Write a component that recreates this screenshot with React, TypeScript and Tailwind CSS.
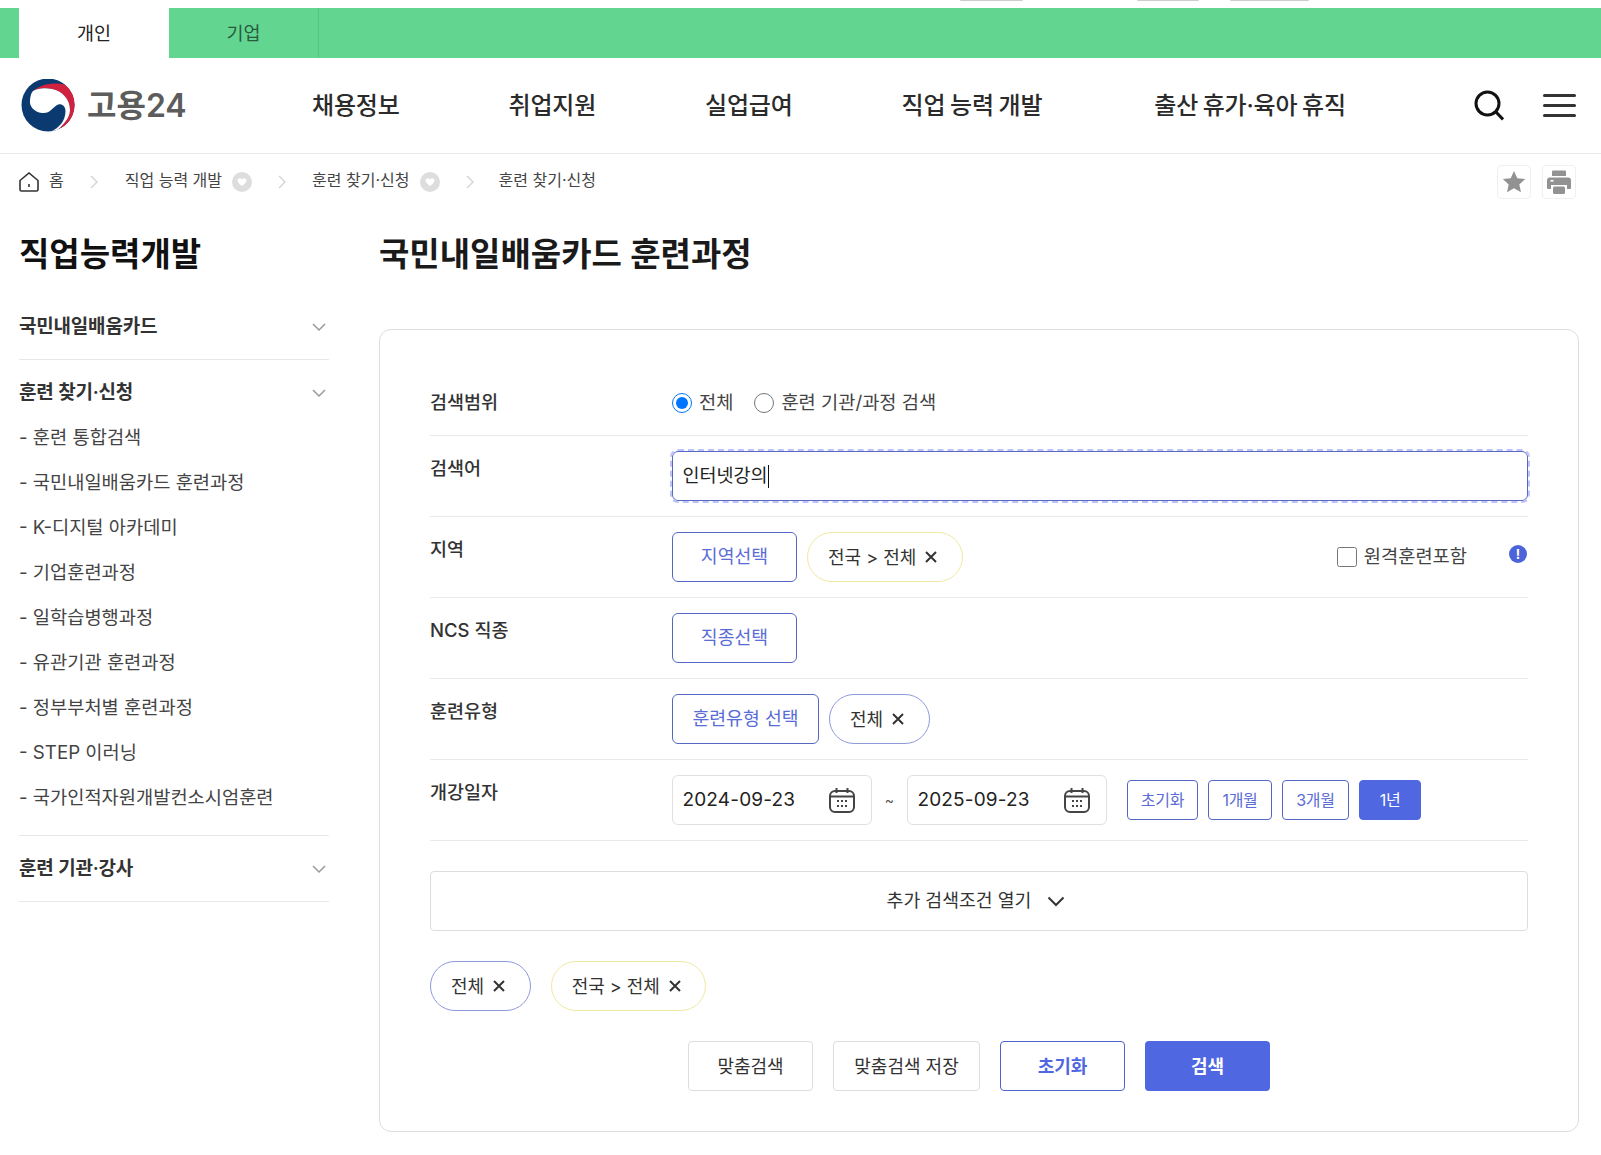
const font = "font-['Inter','Noto_Sans_CJK_KR',sans-serif]";

function Logo() {
  return (
    <svg width="54" height="53" viewBox="0 0 54 53" className="shrink-0">
      <circle cx="27" cy="26" r="26.5" fill="#0b3a70" />
      <path d="M12 12C20 5 33 3 44 5.6A26.5 26.5 0 0 1 37 50.6C44 44 49 38 49 31C49 20 41 12 31 10C24 8.5 17 9 12 12Z" fill="#d2203f" />
      <path d="M44 5.6A26.5 26.5 0 0 1 54 26V0H44Z" fill="#fff" />
      <path d="M54 26A26.5 26.5 0 0 1 37 50.6V53H54Z" fill="#fff" />
      <path d="M12 12C17 9 24 8.5 31 10C41 12 49 20 49 31C49 38 44 44 37 50.6L30 52.5C38 49 44.5 42 44.5 32C44.5 27 40 24 36 26C31 29 29 35 21 34C13 33 8 27 9 21C9.5 17 10 14 12 12Z" fill="#fff" />
    </svg>
  );
}

function Chevron({ className }: { className: string }) {
  return (
    <svg width="8" height="14" viewBox="0 0 8 14" fill="none" stroke="#d4d4d4" strokeWidth="1.4" className={className}>
      <path d="M1 1l6 6-6 6" />
    </svg>
  );
}

function DownDot() {
  return (
    <span className="ml-[10px] flex h-5 w-5 shrink-0 items-center justify-center rounded-full bg-[#dddddd]">
      <svg width="10" height="8" viewBox="0 0 10 8" fill="#fff">
        <path d="M0.5 2.5C0.5 0.5 3.5 -0.5 5 1.3C6.5 -0.5 9.5 0.5 9.5 2.5C9.5 4.5 6.5 7 5 8C3.5 7 0.5 4.5 0.5 2.5Z" />
      </svg>
    </span>
  );
}

function SideToggle({ label }: { label: string }) {
  return (
    <div className="flex h-[26px] items-center justify-between">
      <span className="text-[19px] font-semibold tracking-[-0.2px] text-[#333]">{label}</span>
      <svg width="14" height="9" viewBox="0 0 14 9" fill="none" stroke="#999" strokeWidth="1.5" className="mr-[3px]">
        <path d="M1 1l6 6 6-6" />
      </svg>
    </div>
  );
}

function CloseX() {
  return (
    <svg width="12" height="12" viewBox="0 0 12 12" fill="none" stroke="#333" strokeWidth="2" className="shrink-0">
      <path d="M1 1l10 10M11 1L1 11" />
    </svg>
  );
}

function Chip({ label, tone }: { label: string; tone: "blue" | "yellow" }) {
  return (
    <span
      className={
        "flex h-[50px] items-center gap-[9px] rounded-full border bg-white pl-[20px] pr-[24.5px] text-[18px] text-[#333] " +
        (tone === "blue" ? "border-[#8f99de]" : "border-[#f0e9a0]")
      }
    >
      {label}
      <CloseX />
    </span>
  );
}

function PickButton({ label, width }: { label: string; width: string }) {
  return (
    <button className={"h-[50px] rounded-md border border-[#5568c4] bg-white text-[18.3px] text-[#5a6cd6] " + width}>
      {label}
    </button>
  );
}

function Row({ label, children }: { label: string; children: React.ReactNode }) {
  return (
    <div className="flex h-[81px] border-b border-[#eaeaea] pt-[15px]">
      <div className="w-[242px] shrink-0 pt-[2px] text-[18.5px] font-medium leading-[30px] text-[#333]">{label}</div>
      <div className="flex flex-1 items-start">{children}</div>
    </div>
  );
}

function Calendar() {
  return (
    <svg width="28" height="26" viewBox="0 0 28 26" fill="none" stroke="#444" strokeWidth="2" className="shrink-0">
      <rect x="2" y="4" width="24" height="21" rx="5" />
      <path d="M2 9.5h24M8.5 1v5M19.5 1v5" />
      <g fill="#444" stroke="none">
        <rect x="9" y="13" width="2" height="2" />
        <rect x="13" y="13" width="2" height="2" />
        <rect x="17" y="13" width="2" height="2" />
        <rect x="9" y="18" width="2" height="2" />
        <rect x="13" y="18" width="2" height="2" />
        <rect x="17" y="18" width="2" height="2" />
      </g>
    </svg>
  );
}

function DateBox({ value }: { value: string }) {
  return (
    <div className="flex h-[50px] w-[200px] items-center justify-between rounded-md border border-[#e0e0e0] pl-[9.5px] pr-[15px] text-[19px] tracking-[0.15px] text-[#222]">
      <span className="pt-px">{value}</span>
      <Calendar />
    </div>
  );
}

function RangeButton({ label, width, active }: { label: string; width: string; active?: boolean }) {
  return (
    <button
      className={
        "h-[40px] rounded-[4px] border text-[16px] tracking-[-0.3px] " +
        width +
        (active ? " border-[#4f67e0] bg-[#4f67e0] text-white" : " border-[#5568c4] bg-white text-[#5a6cd6]")
      }
    >
      {label}
    </button>
  );
}

const subLinks = [
  "- 훈련 통합검색",
  "- 국민내일배움카드 훈련과정",
  "- K-디지털 아카데미",
  "- 기업훈련과정",
  "- 일학습병행과정",
  "- 유관기관 훈련과정",
  "- 정부부처별 훈련과정",
  "- STEP 이러닝",
  "- 국가인적자원개발컨소시엄훈련",
];

export default function App() {
  return (
    <div className={"h-[1155px] overflow-hidden bg-white " + font}>
      <div className="flex h-2 items-start">
        <span className="ml-[960px] h-px w-[63px] rounded-b bg-[#cccccc]" />
        <span className="ml-[114px] h-px w-[62px] rounded-b bg-[#cccccc]" />
        <span className="ml-[31px] h-px w-[79px] rounded-b bg-[#cccccc]" />
      </div>

      <div className="flex h-[50px] bg-[#62d591] pl-[19px]">
        <div className="flex w-[150px] items-center justify-center bg-white pt-px text-[18.5px] text-[#222]">개인</div>
        <div className="flex w-[150px] items-center justify-center border-r border-[#56c283] pt-px text-[18.5px] text-[#2a5a3e]">기업</div>
      </div>

      <header className="flex h-[96px] items-center border-b border-[#e8e8e8] pl-[21px] pr-[25px]">
        <div className="flex w-[291px] items-center gap-[12px]">
          <Logo />
          <span className="text-[32px] font-semibold text-[#5c5c5c]">고용24</span>
        </div>
        <nav className="flex gap-[109px] text-[24px] font-medium tracking-[-0.2px] text-[#2b2b2b] [word-spacing:-1.5px]">
          <span>채용정보</span>
          <span>취업지원</span>
          <span>실업급여</span>
          <span>직업 능력 개발</span>
          <span className="ml-[3px]">출산 휴가·육아 휴직</span>
        </nav>
        <div className="ml-auto flex items-center gap-[39px]">
          <svg width="30" height="31" viewBox="0 0 30 31" fill="none" stroke="#111" strokeWidth="3">
            <circle cx="13.5" cy="13.5" r="11.5" />
            <path d="M22 22l7 7.5" />
          </svg>
          <div className="flex w-[33px] flex-col gap-[7px]">
            <span className="h-[3px] rounded-full bg-[#333]" />
            <span className="h-[3px] rounded-full bg-[#333]" />
            <span className="h-[3px] rounded-full bg-[#333]" />
          </div>
        </div>
      </header>

      <div className="flex h-[56px] items-center pl-[19px] pr-[25px] text-[16px] text-[#444]">
        <svg width="20" height="20" viewBox="0 0 20 20" fill="none" stroke="#333" strokeWidth="1.6" className="mr-[10px]">
          <path d="M1 8.5L10 1l9 7.5V17.5a1.5 1.5 0 01-1.5 1.5h-15A1.5 1.5 0 011 17.5Z" />
          <path d="M10 12v3" />
        </svg>
        <span className="pb-[4px]">홈</span>
        <Chevron className="ml-[26px] mr-[27px]" />
        <span className="pb-[4px]">직업 능력 개발</span>
        <DownDot />
        <Chevron className="ml-[26px] mr-[26px]" />
        <span className="pb-[4px]">훈련 찾기·신청</span>
        <DownDot />
        <Chevron className="ml-[26px] mr-[25px]" />
        <span className="pb-[4px]">훈련 찾기·신청</span>
        <div className="ml-auto flex gap-[11px]">
          <span className="flex h-[34px] w-[34px] items-center justify-center rounded-[4px] border border-[#f0f0f0]">
            <svg width="24" height="24" viewBox="0 0 24 24" fill="#929292">
              <path d="M12 1l3.3 7.3 7.9.8-5.9 5.3 1.7 7.8L12 18.2l-7 4 1.7-7.8L.8 9.1l7.9-.8z" />
            </svg>
          </span>
          <span className="flex h-[34px] w-[34px] items-center justify-center rounded-[4px] border border-[#f0f0f0]">
            <svg width="26" height="26" viewBox="0 0 26 26" fill="#929292">
              <path d="M7 1.5h12a1 1 0 011 1V7H6V2.5a1 1 0 011-1z" />
              <path d="M4 8.5h18a3 3 0 013 3V19a1 1 0 01-1 1h-3v-4H5v4H2a1 1 0 01-1-1v-7.5a3 3 0 013-3z" />
              <rect x="7" y="17.5" width="12" height="7.5" rx="1.5" />
              <rect x="4.5" y="11" width="3" height="1.6" fill="#fff" />
            </svg>
          </span>
        </div>
      </div>

      <div className="flex gap-[50px] pl-[19px] pt-[21px]">
        <aside className="w-[310px] shrink-0">
          <h2 className="mb-[16px] text-[33px] font-semibold leading-[46px] text-[#111]">직업능력개발</h2>
          <div className="border-b border-[#e8e8e8] pb-[19px] pt-[21px]">
            <SideToggle label="국민내일배움카드" />
          </div>
          <div className="border-b border-[#e8e8e8] pb-[14px] pt-[20px]">
            <SideToggle label="훈련 찾기·신청" />
            <ul className="mt-[10px] text-[18.7px] text-[#444]">
              {subLinks.map((link) => (
                <li key={link} className="flex h-[45px] items-center">
                  {link}
                </li>
              ))}
            </ul>
          </div>
          <div className="border-b border-[#e8e8e8] pb-[19px] pt-[20px]">
            <SideToggle label="훈련 기관·강사" />
          </div>
        </aside>

        <main className="w-[1200px] shrink-0">
          <h1 className="mb-[52px] text-[33px] font-semibold leading-[46px] text-[#1a1a1a]">
            국민내일배움카드 훈련과정
          </h1>
          <section className="h-[803px] rounded-xl border border-[#dddddd] px-[50px] pt-[50px]">
            <div className="flex h-[56px] items-center border-b border-[#eaeaea] pb-[9px]">
              <div className="w-[242px] shrink-0 text-[18.5px] font-medium text-[#333]">검색범위</div>
              <label className="flex items-center gap-[7px] text-[18.7px] text-[#444]">
                <input type="radio" name="scope" defaultChecked className="h-5 w-5" />
                전체
              </label>
              <label className="ml-[21px] flex items-center gap-[7px] text-[18.7px] text-[#444]">
                <input type="radio" name="scope" className="h-5 w-5" />
                훈련 기관/과정 검색
              </label>
            </div>

            <Row label="검색어">
              <div className="flex h-[50px] w-full items-center rounded-md border border-[#5568c4] pl-[9.5px] text-[18.5px] text-[#222] outline-2 outline-offset-0 outline-dashed outline-[#c0c3f7]">
                인터넷강의
                <span className="h-[23px] w-px bg-[#111]" />
              </div>
            </Row>

            <Row label="지역">
              <PickButton label="지역선택" width="w-[125px]" />
              <span className="ml-[10px]">
                <Chip label="전국 > 전체" tone="yellow" />
              </span>
              <label className="ml-auto flex h-[50px] items-center gap-[7px] text-[18.7px] text-[#444]">
                <input type="checkbox" className="h-5 w-5" />
                원격훈련포함
              </label>
              <span className="ml-[42px] mr-px mt-[13px] flex h-[18px] w-[18px] items-center justify-center rounded-full bg-[#4c63da] text-[13px] font-bold leading-none text-white">
                !
              </span>
            </Row>

            <Row label="NCS 직종">
              <PickButton label="직종선택" width="w-[125px]" />
            </Row>

            <Row label="훈련유형">
              <PickButton label="훈련유형 선택" width="w-[147px]" />
              <span className="ml-[10px]">
                <Chip label="전체" tone="blue" />
              </span>
            </Row>

            <Row label="개강일자">
              <DateBox value="2024-09-23" />
              <span className="w-[35px] text-center text-[14px] leading-[50px] text-[#555]">~</span>
              <DateBox value="2025-09-23" />
              <div className="ml-[20px] mt-[5px] flex gap-[10px]">
                <RangeButton label="초기화" width="w-[71px]" />
                <RangeButton label="1개월" width="w-[64px]" />
                <RangeButton label="3개월" width="w-[67px]" />
                <RangeButton label="1년" width="w-[62px]" active />
              </div>
            </Row>

            <button className="mt-[30px] flex h-[60px] w-full items-center justify-center gap-[16px] rounded-[4px] border border-[#dddddd] pr-[6px] text-[18.3px] text-[#333]">
              추가 검색조건 열기
              <svg width="18" height="11" viewBox="0 0 18 11" fill="none" stroke="#333" strokeWidth="2">
                <path d="M1.5 1.5L9 9l7.5-7.5" />
              </svg>
            </button>

            <div className="mt-[30px] flex gap-[20px]">
              <Chip label="전체" tone="blue" />
              <Chip label="전국 > 전체" tone="yellow" />
            </div>

            <div className="mt-[30px] flex justify-center gap-[20px]">
              <button className="h-[50px] w-[125px] rounded-[4px] border border-[#dddddd] text-[18px] text-[#333]">맞춤검색</button>
              <button className="h-[50px] w-[147px] rounded-[4px] border border-[#dddddd] text-[18px] text-[#333]">맞춤검색 저장</button>
              <button className="h-[50px] w-[125px] rounded-[4px] border border-[#4f63c8] text-[18px] font-bold text-[#4f67e0]">초기화</button>
              <button className="h-[50px] w-[125px] rounded-[4px] bg-[#4f67e0] text-[18px] font-bold text-white">검색</button>
            </div>
          </section>
        </main>
      </div>
    </div>
  );
}
